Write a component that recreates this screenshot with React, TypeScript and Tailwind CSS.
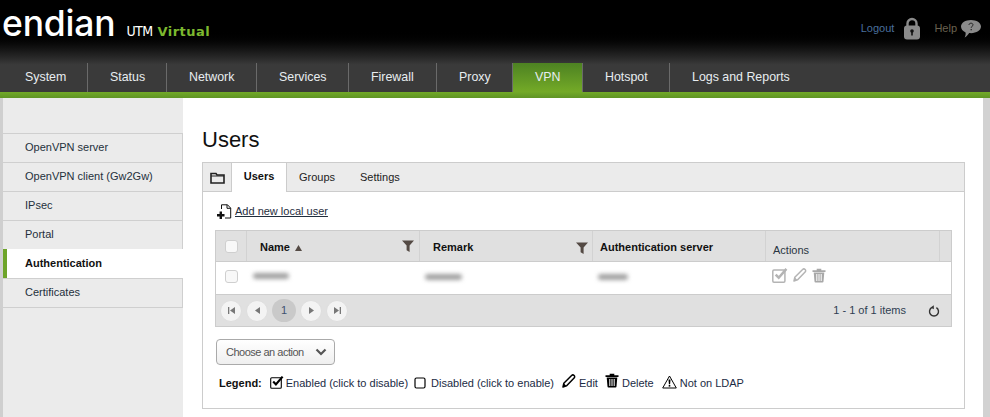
import React from "react";

const NAV = ["System", "Status", "Network", "Services", "Firewall", "Proxy", "VPN", "Hotspot", "Logs and Reports"];
const SIDE = ["OpenVPN server", "OpenVPN client (Gw2Gw)", "IPsec", "Portal", "Authentication", "Certificates"];

function Filter({ className = "" }: { className?: string }) {
  return (
    <svg width="12" height="12" viewBox="0 0 12 12" className={className}>
      <path d="M0 0.5h12L7.6 5.5V12L4.6 10.2V5.5Z" fill="#544a44" />
    </svg>
  );
}

function Check({ color = "#000", thin = 1.1, size = 14 }: { color?: string; thin?: number; size?: number }) {
  return (
    <svg width={size} height={size} viewBox="0 0 14 14" fill="none">
      <rect x="0.7" y="2.7" width="10.6" height="10.6" rx="1" stroke={color} strokeWidth={thin} />
      <path d="M3.2 6.6l2.7 2.8L12.6 1.6" stroke={color} strokeWidth="2.2" />
    </svg>
  );
}

function Pencil({ color = "#000" }: { color?: string }) {
  return (
    <svg width="14" height="14" viewBox="0 0 14 14" fill="none">
      <path d="M1 13l.8-3.7L9.6 1.5c.8-.8 1.8-.7 2.500 0s.8 1.700 0 2.500L4.400 11.900Z" stroke={color} strokeWidth="1.500" strokeLinejoin="round" />
      <path d="M1 13l.8-3.700 2.600 2.600Z" fill={color} />
    </svg>
  );
}

function Trash({ color = "#000" }: { color?: string }) {
  return (
    <svg width="14" height="15" viewBox="0 0 14 15">
      <path d="M0.5 2.2h4.2V0.8h4.6v1.4h4.2v1.8H.5Z" fill={color} />
      <path d="M1.7 4.6h10.6l-.8 9a1 1 0 0 1-1 1H3.500a1 1 0 0 1-1-1Z" fill={color} />
      <path d="M4.800 6v7M7 6v7M9.200 6v7" stroke="#fff" strokeWidth="1" />
    </svg>
  );
}

function PagerBtn({ d }: { d: string }) {
  return (
    <span className="flex h-[22px] w-[22px] items-center justify-center rounded-full border border-[#dedede] bg-[#f3f3f3]">
      <svg width="9" height="9" viewBox="0 0 9 9">
        <path d={d} fill="#777" />
      </svg>
    </span>
  );
}

function Smudge({ w }: { w: number }) {
  return <span className="block h-[6px] rounded-full bg-[#a0a0a0] blur-[2px]" style={{ width: w }} />;
}

export default function App() {
  return (
    <div className="flex h-[417px] w-[990px] flex-col overflow-hidden bg-white font-['Liberation_Sans',Arial,sans-serif] text-[11px] text-[#111]">
      <header className="bg-gradient-to-b from-black from-[30%] to-[#3a3a3a] to-[66%]">
        <div className="flex h-[63px] items-start justify-between">
          <div className="flex items-baseline pl-[2px] pt-[2px]">
            <span className="font-['Inter',sans-serif] text-[35.500px] font-medium leading-[44px] tracking-[-0.2px] text-white">endian</span>
            <span className="ml-[11px] font-['DejaVu_Sans_Condensed','DejaVu_Sans',sans-serif] text-[14px] font-normal tracking-[-0.6px] text-white">UTM</span>
            <span className="ml-[5px] font-['DejaVu_Sans',sans-serif] text-[13px] font-bold tracking-[0.5px] text-[#7cb82f]">Virtual</span>
          </div>
          <div className="flex items-center pr-[9px] pt-[17px]">
            <span className="text-[11px] text-[#4a6f9c]">Logout</span>
            <svg width="18" height="23" viewBox="0 0 18 23" className="ml-[9px]">
              <path d="M4.500 10V6.500a4.500 4.500 0 0 1 9 0V10" fill="none" stroke="#8a8a8a" strokeWidth="2.400" />
              <rect x="1" y="8.500" width="16" height="14" rx="3" fill="#8a8a8a" />
              <circle cx="9" cy="14" r="1.800" fill="#111" />
              <rect x="8.200" y="14.500" width="1.600" height="4" fill="#111" />
            </svg>
            <span className="ml-[13px] text-[11px] text-[#6a6250]">Help</span>
            <svg width="20" height="18" viewBox="0 0 20 18" className="ml-[4px]">
              <path d="M10 0c5.500 0 10 2.800 10 6.600S15.500 13.200 10 13.200c-.6 0-1.200 0-1.800-.1C7 15 5.600 16.600 3.600 17.600c.8-1.600 1.200-3.200 1-5.200C1.800 11.300 0 9.200 0 6.600 0 2.800 4.500 0 10 0Z" fill="#8a8a8a" />
              <path d="M8 5c0-1.200.9-1.800 2-1.800s2 .6 2 1.700c0 1.300-1.800 1.400-1.800 2.900" fill="none" stroke="#222" strokeWidth="1" />
              <rect x="9.600" y="9" width="1.200" height="1.300" fill="#222" />
            </svg>
          </div>
        </div>
        <nav className="flex h-[29px]">
          {NAV.map((n, i) => {
            const active = n === "VPN";
            const last = i === NAV.length - 1;
            return (
              <div
                key={n}
                className={
                  "flex h-full items-center text-[12.4px] text-[#e8edf0] " +
                  (i === 0 ? "w-[88px] pl-[25px] " : "") +
                  (active ? "bg-gradient-to-b from-[#4d8222] to-[#74aa27] " : "") +
                  (last ? "pl-[22px] " : "border-r border-[#6a6a6a] ") +
                  (i === 1 ? "w-[79px] pl-[22px] " : "") +
                  (i === 2 ? "w-[90px] pl-[22px] " : "") +
                  (i === 3 ? "w-[92px] pl-[22px] " : "") +
                  (i === 4 ? "w-[88px] pl-[22px] " : "") +
                  (i === 5 ? "w-[76px] pl-[22px] " : "") +
                  (i === 6 ? "w-[70px] pl-[22px] " : "") +
                  (i === 7 ? "w-[87px] pl-[22px] " : "")
                }
              >
                {n}
              </div>
            );
          })}
        </nav>
        <div className="h-[6px] bg-gradient-to-b from-[#72a928] to-[#5f9424]" />
      </header>

      <div className="flex min-h-0 flex-1">
        <div className="w-[3px] bg-[#cfcfcf]" />
        <aside className="w-[180px] bg-[#ebebeb] pt-[35px]">
          {SIDE.map((s, i) => {
            const active = s === "Authentication";
            return active ? (
              <div key={s} className="flex h-[29px] items-center border-l-[4px] border-[#6ea42a] bg-white pl-[18px] text-[11px] font-bold text-[#111]">
                {s}
              </div>
            ) : (
              <div key={s} className={"flex items-center border-r border-t border-[#cfcfcf] pb-[2px] pl-[22px] text-[11px] text-[#24303c] " + (i === 5 ? "h-[30px] border-b" : "h-[29px]")}>
                {s}
              </div>
            );
          })}
        </aside>

        <main className="min-w-0 flex-1 bg-white pl-[19px] pr-[18px]">
          <h1 className="flex h-[64px] items-end pb-[9px] text-[22px] leading-[26px] text-[#111]">Users</h1>
          <section className="h-[247px] border border-[#cccccc]">
            <div className="flex h-[29px] border-b border-[#cccccc] bg-[#ebebeb]">
              <div className="flex w-[29px] items-center justify-center border-r border-[#cccccc] pt-[1px]">
                <svg width="15" height="12" viewBox="0 0 15 12" fill="none">
                  <path d="M1 11V1.500h5l1 1.500h7v8Z" stroke="#222" strokeWidth="1.600" />
                  <path d="M1 4h13" stroke="#222" strokeWidth="1" />
                </svg>
              </div>
              <div className="flex h-[29px] w-[55px] items-center justify-center border-r border-[#cccccc] bg-white pb-[2px] font-bold text-[#111]">Users</div>
              <div className="flex w-[73px] items-center justify-start pl-[12px] text-[#222]">Groups</div>
              <div className="flex w-[62px] items-center justify-start text-[#222]">Settings</div>
            </div>

            <div className="px-[12px]">
              <div className="flex h-[38px] items-center pl-[1px]">
                <svg width="16" height="15" viewBox="0 0 16 15" fill="none">
                  <path d="M5.500 5V.8h6l3.200 3.300V14H9" stroke="#111" strokeWidth="1" />
                  <path d="M11 .8v3.500h3.700" stroke="#111" strokeWidth="1" />
                  <path d="M3.600 7.500h2.400v2.500h2.500v2.400H6V15H3.600v-2.600H1V10h2.600Z" fill="#111" />
                </svg>
                <span className="ml-[3px] text-[#1f2d3d] underline">Add new local user</span>
              </div>

              <div className="border border-[#cccccc]">
                <div className="flex h-[31px] border-b border-[#cccccc] bg-[#e0e0e0]">
                  <div className="flex w-[31px] items-center justify-center border-r border-[#d2d2d2]">
                    <span className="h-[13px] w-[13px] rounded-[3px] border border-[#cfcfcf] bg-[#f8f8f8]" />
                  </div>
                  <div className="relative flex w-[173px] items-start border-r border-[#d2d2d2] pl-[13px] pt-[8px] font-bold">
                    Name
                    <svg width="7" height="6" viewBox="0 0 7 6" className="ml-[5px] mt-[6px]">
                      <path d="M3.500 0L7 6H0Z" fill="#544a44" />
                    </svg>
                    <Filter className="absolute right-[5px] top-[9px]" />
                  </div>
                  <div className="relative flex w-[173px] items-center border-r border-[#d2d2d2] pl-[13px] pt-[2px] font-bold">
                    Remark
                    <Filter className="absolute right-[4px] top-[11px]" />
                  </div>
                  <div className="flex w-[173px] items-center border-r border-[#d2d2d2] pl-[7px] pt-[2px] font-bold">Authentication server</div>
                  <div className="flex w-[174px] items-center border-r border-[#d2d2d2] pl-[7px] pt-[8px] text-[#2a3542]">Actions</div>
                </div>

                <div className="flex h-[33px] border-b border-[#cccccc] bg-white">
                  <div className="flex w-[31px] items-center justify-center pb-[3px]">
                    <span className="h-[13px] w-[13px] rounded-[3px] border border-[#cfcfcf] bg-[#f8f8f8]" />
                  </div>
                  <div className="flex w-[173px] items-center pb-[4px] pl-[6px]"><Smudge w={36} /></div>
                  <div className="flex w-[173px] items-center pb-[3px] pl-[5px]"><Smudge w={37} /></div>
                  <div className="flex w-[173px] items-center pb-[3px] pl-[5px]"><Smudge w={30} /></div>
                  <div className="flex items-center gap-[5px] pb-[6px] pl-[6px]">
                    <Check color="#b4b4b4" thin={1.300} size={16} />
                    <Pencil color="#b4b4b4" />
                    <Trash color="#a8a8a8" />
                  </div>
                </div>

                <div className="flex h-[31px] items-center justify-between bg-[#e0e0e0] pl-[4px] pr-[11px]">
                  <div className="flex items-center gap-[4px]">
                    <PagerBtn d="M1 1h1.300v7H1ZM8 1v7L3 4.500Z" />
                    <PagerBtn d="M7 1v7L2 4.500Z" />
                    <span className="flex h-[23px] w-[24px] items-center justify-center rounded-full bg-[#c9c9c9] text-[#3f5270]">1</span>
                    <PagerBtn d="M2 1v7l5-3.500Z" />
                    <PagerBtn d="M1 1v7l5-3.500ZM6.700 1H8v7H6.700Z" />
                  </div>
                  <div className="flex items-center">
                    <span className="text-[#2f3e52]">1 - 1 of 1 items</span>
                    <svg width="12" height="12" viewBox="0 0 12 12" fill="none" className="ml-[22px]">
                      <path d="M3.600 2.700a4.500 4.500 0 1 0 4.800 0" stroke="#333" strokeWidth="1.400" />
                      <path d="M5.800 .2v4L2.600 2.500Z" fill="#333" />
                    </svg>
                  </div>
                </div>
              </div>

              <button className="ml-[1px] mt-[12px] flex h-[26px] w-[119px] items-center whitespace-nowrap rounded-[4px] border border-[#aaaaaa] bg-gradient-to-b from-white to-[#efefef] pl-[9px] text-[11px] tracking-[-0.5px] text-[#555]">
                Choose an action
                <svg width="12" height="8" viewBox="0 0 12 8" fill="none" className="ml-[11px]">
                  <path d="M1.500 1.500L6 6l4.500-4.500" stroke="#555" strokeWidth="2.200" />
                </svg>
              </button>

              <div className="mt-[8px] flex items-end whitespace-nowrap pl-[4px] text-[#1b2b44]">
                <span className="font-bold text-[#111]">Legend:</span>
                <span className="mb-[2px] ml-[8px]"><Check /></span>
                <span className="ml-[2px]">Enabled (click to disable)</span>
                <svg width="12" height="12" viewBox="0 0 12 12" fill="none" className="mb-[2px] ml-[6px]">
                  <rect x="1" y="1" width="10" height="10" rx="1.500" stroke="#000" strokeWidth="1.200" />
                </svg>
                <span className="ml-[5px]">Disabled (click to enable)</span>
                <span className="mb-[3px] ml-[8px]"><Pencil /></span>
                <span className="ml-[3px]">Edit</span>
                <span className="mb-[3px] ml-[7px]"><Trash /></span>
                <span className="ml-[3px]">Delete</span>
                <svg width="15" height="14" viewBox="0 0 15 14" fill="none" className="mb-[2px] ml-[8px]">
                  <path d="M7.500 1L14.300 13H.7Z" stroke="#000" strokeWidth="1" strokeLinejoin="round" />
                  <path d="M6.500 4.500h2l-.4 4.700H6.900Z" fill="#000" />
                  <rect x="6.700" y="10" width="1.600" height="1.600" fill="#000" />
                </svg>
                <span className="ml-[3px]">Not on LDAP</span>
              </div>
            </div>
          </section>
        </main>
        <div className="w-[7px] bg-[#d2d2d2]" />
      </div>
    </div>
  );
}
